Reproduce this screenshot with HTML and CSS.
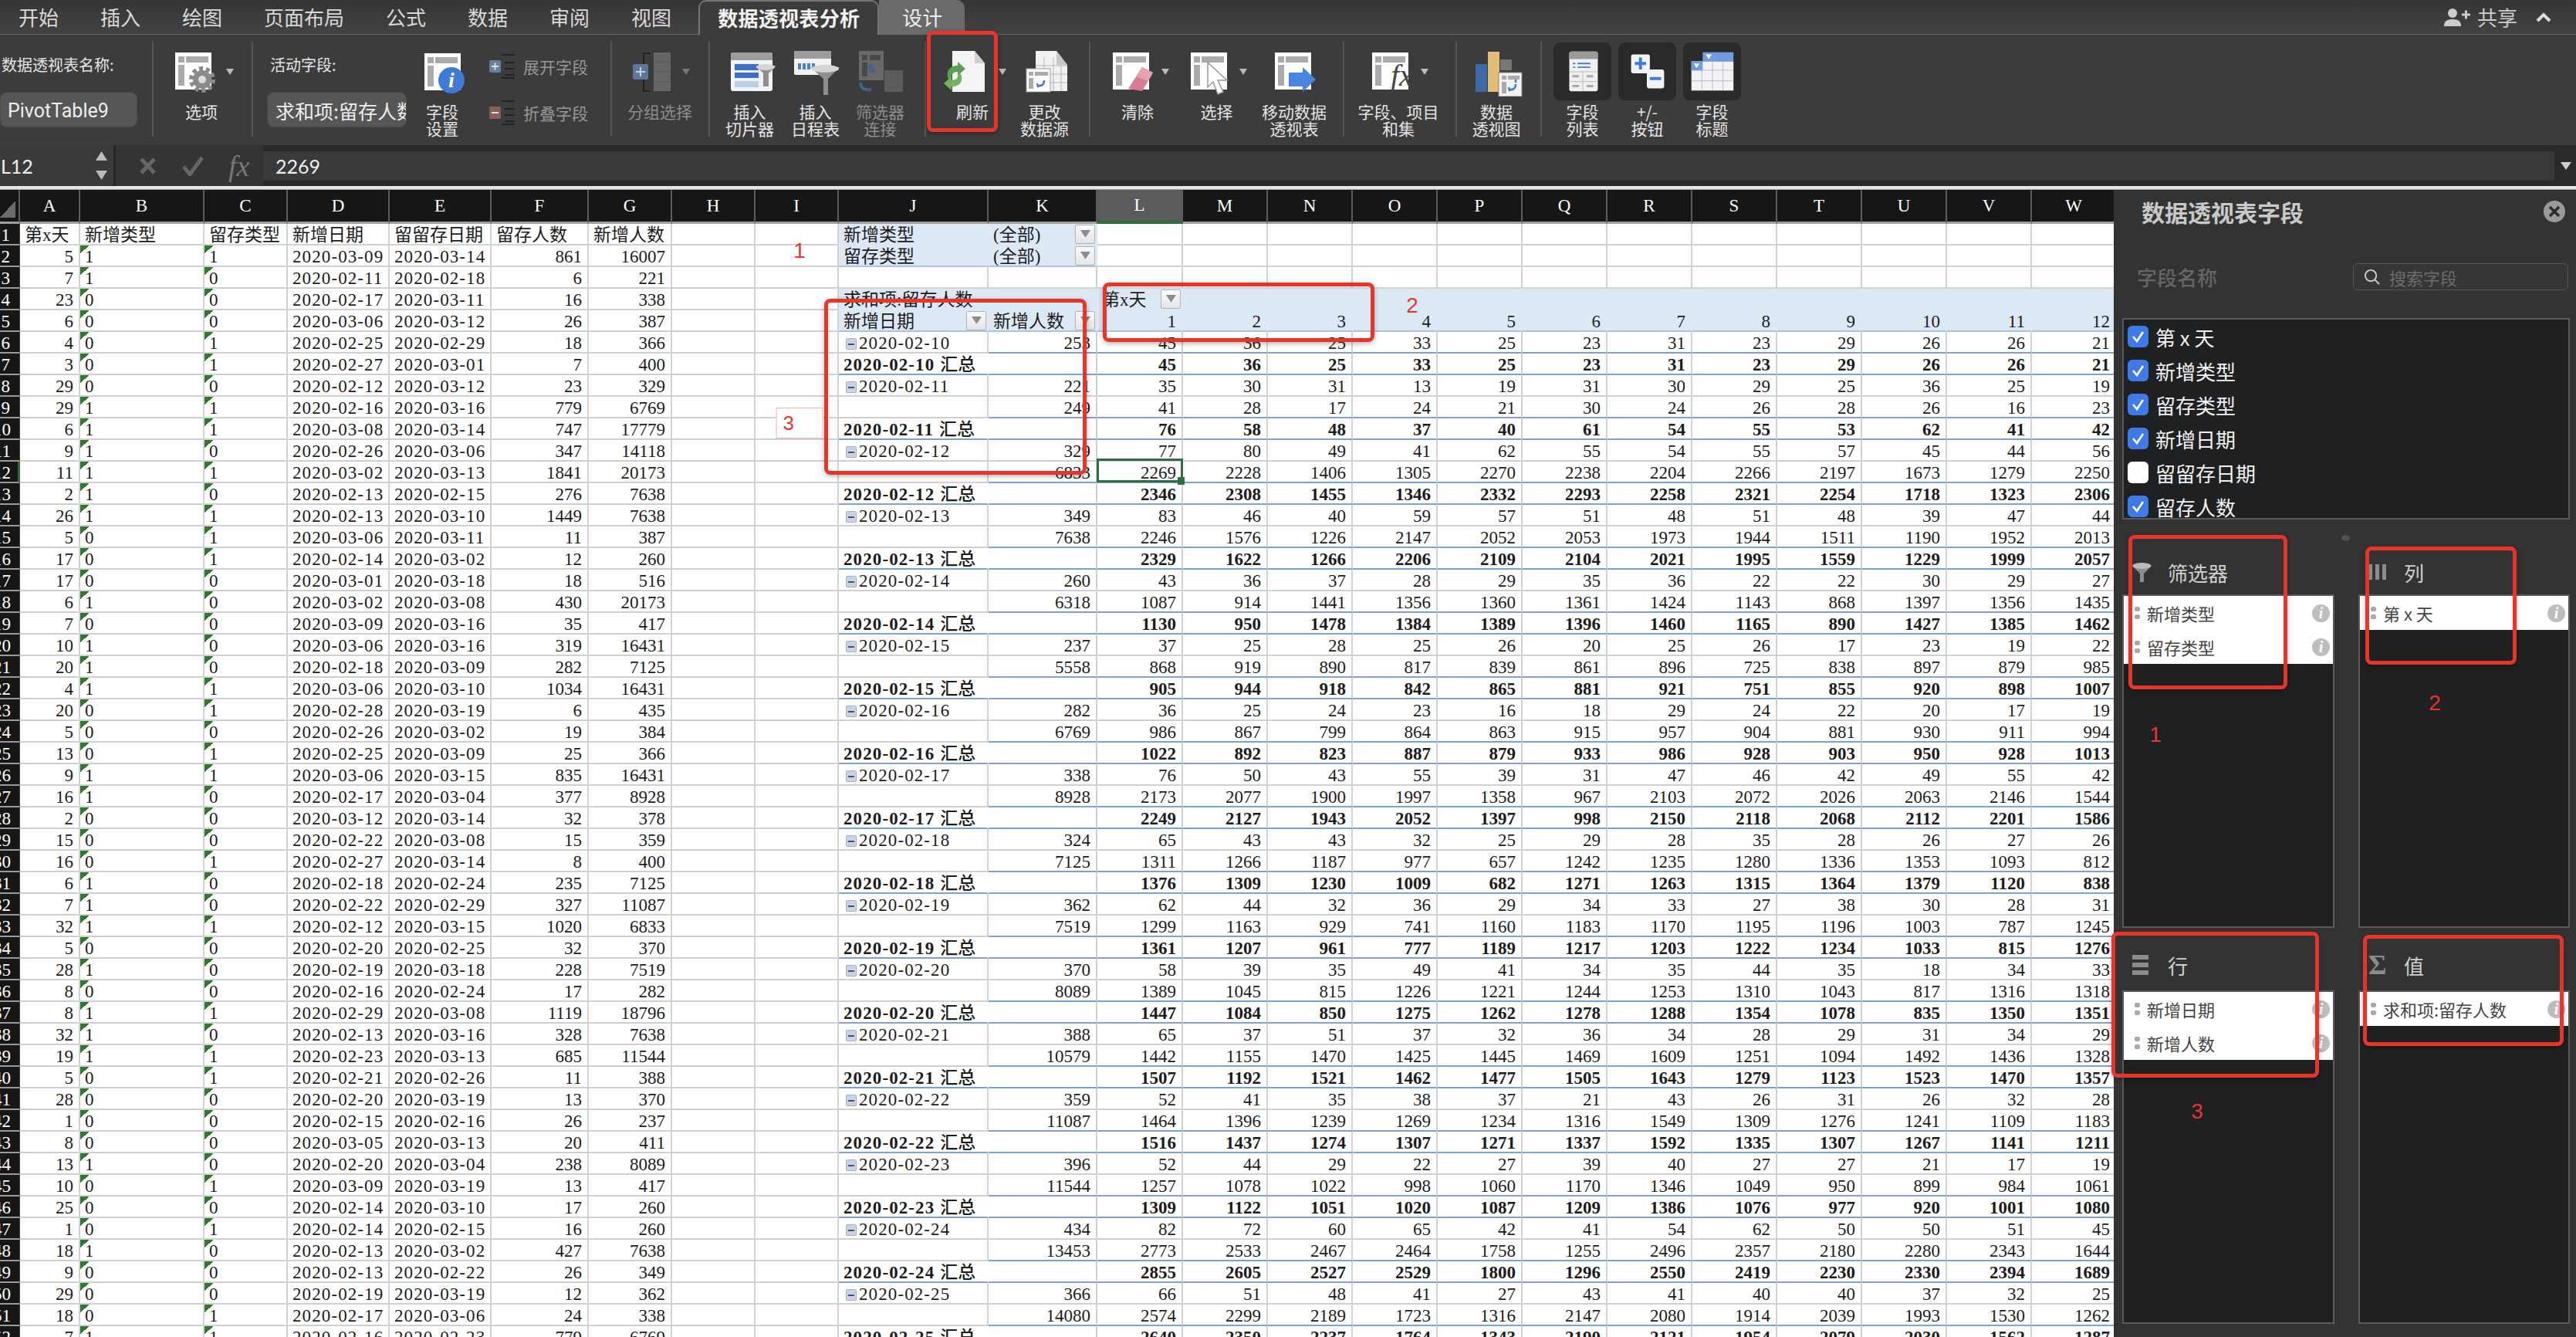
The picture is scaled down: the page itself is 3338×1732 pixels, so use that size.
FILE: index.html
```html
<!DOCTYPE html>
<html lang="zh">
<head>
<meta charset="utf-8">
<title>数据透视表</title>
<link rel="stylesheet" href="styles.css">
</head>
<body>
<svg class="defs" aria-hidden="true">
  <symbol id="pv" viewBox="0 0 47 48"><rect width="47" height="48" fill="#fff"/><path d="M4 5h8v8H4zM14 5h29v8H14zM4 16h8v27H4z" fill="#aaa"/></symbol>
  <symbol id="chk" viewBox="0 0 27 28"><path d="M7 14l5 6 8-12" fill="none" stroke="#fff" stroke-width="2.6"/></symbol>
  <symbol id="up" viewBox="0 0 12 10"><path d="M0 0h12L6 9z" fill="#8c8c8c"/></symbol>
</svg>

<nav class="tabs">
  <span class="tab first">开始</span><span class="tab">插入</span><span class="tab">绘图</span><span class="tab">页面布局</span><span class="tab">公式</span><span class="tab">数据</span><span class="tab">审阅</span><span class="tab">视图</span>
  <span class="tab active">数据透视表分析</span><span class="tab design">设计</span>
  <div class="share">
    <svg class="share-ic" viewBox="0 0 34 24"><circle cx="11" cy="7" r="6" fill="#ccc"/><path d="M0 24c0-7 4-9 11-9s11 2 11 9z" fill="#ccc"/><path d="M23 9h11M28.500 3.500v11" stroke="#ccc" stroke-width="3"/></svg>
    <span>共享</span>
    <svg class="chev" viewBox="0 0 20 13"><path d="M2 11l8-8 8 8" fill="none" stroke="#ddd" stroke-width="4"/></svg>
  </div>
</nav>

<section class="ribbon">
  <div class="namegrp">
    <div class="rlabel">数据透视表名称:</div>
    <div class="rinput name-input">PivotTable9</div>
  </div>
  <i class="sep"></i>
  <div class="rb b-options">
    <svg class="ic" viewBox="0 0 84 62"><use href="#pv" x="8" y="5" width="47" height="48"/><circle cx="43" cy="40" r="14" fill="none" stroke="#8a8a8a" stroke-width="6" stroke-dasharray="5 3.800"/><circle cx="43" cy="40" r="12" fill="#8a8a8a"/><circle cx="43" cy="40" r="5" fill="#ddd"/><path d="M74 26h10l-5 8z" fill="#bbb"/></svg>
    <span>选项</span>
  </div>
  <i class="sep s-a"></i>
  <div class="activegrp">
    <div class="rlabel pad">活动字段:</div>
    <div class="rinput field-input">求和项:留存人数</div>
  </div>
  <div class="rb b-setting">
    <svg class="ic" viewBox="0 0 60 62"><use href="#pv" x="7" y="6" width="47" height="48"/><circle cx="42" cy="41" r="17" fill="#3f7ad6"/><text x="42" y="50" class="ic-i">i</text></svg>
    <span>字段<br>设置</span>
  </div>
  <div class="expandcol">
    <div class="exrow"><svg viewBox="0 0 33 33"><path d="M16 2h17M20 12h13M20 20h13M20 28h13M16 32h17" stroke="#222" stroke-width="2"/><rect y="9" width="15" height="16" rx="2" fill="#64809f"/><path d="M3 17h9M7.500 12.500v9" stroke="#ddd" stroke-width="2"/></svg><span>展开字段</span></div>
    <div class="exrow"><svg viewBox="0 0 33 33"><path d="M16 2h17M20 12h13M20 20h13M20 28h13M16 32h17" stroke="#222" stroke-width="2"/><rect y="9" width="15" height="16" rx="2" fill="#8b5c5c"/><path d="M3 17h9" stroke="#ddd" stroke-width="2"/></svg><span>折叠字段</span></div>
  </div>
  <i class="sep s-b"></i>
  <div class="rb b-group dim">
    <svg class="ic" viewBox="0 0 92 62"><path d="M33 6h-8v49h8" fill="none" stroke="#222" stroke-width="2"/><path d="M38 5h22v50H38z" fill="#666"/><path d="M38 17h22M38 30h22M38 43h22" stroke="#555"/><rect x="11" y="20" width="20" height="20" rx="2" fill="#5c7898"/><path d="M15 30h12M21 24v12" stroke="#ccd" stroke-width="2"/><path d="M75 26h10l-5 8z" fill="#777"/></svg>
    <span>分组选择</span>
  </div>
  <i class="sep s-b"></i>
  <div class="rb b-slicer">
    <svg class="ic" viewBox="0 0 73 62"><rect x="12" y="5" width="54" height="50" rx="3" fill="#f1f3f6"/><path d="M12 15V8q0-3 3-3h48q3 0 3 3v7z" fill="#9d9d9d"/><path d="M17 20h31v8H17zM17 31h31v7H17z" fill="#3f6fc4"/><path d="M17 42h31v8H17z" fill="#b7cfe9"/><path d="M44 22h27l-10 10v17h-7V32z" fill="#8f8f8f"/><ellipse cx="57" cy="24" rx="12" ry="4" fill="#d5d5d5"/></svg>
    <span>插入<br>切片器</span>
  </div>
  <div class="rb b-timeline">
    <svg class="ic" viewBox="0 0 73 62"><rect x="9" y="3" width="48" height="31" rx="2" fill="#f1f3f6"/><path d="M9 13V5q0-2 2-2h44q2 0 2 2v8z" fill="#9d9d9d"/><path d="M14 19h4v8h-4zM20 19h4v8h-4zM26 19h4v8h-4zM32 19h4v8h-4z" fill="#4f7fcc"/><path d="M30 24h38L53 39v21h-6V39z" fill="#8f8f8f"/><ellipse cx="49" cy="26" rx="18" ry="5" fill="#d5d5d5"/></svg>
    <span>插入<br>日程表</span>
  </div>
  <div class="rb b-conn dim">
    <svg class="ic" viewBox="0 0 73 62"><g opacity=".55"><rect x="9" y="3" width="32" height="38" fill="#8f8f8f"/><path d="M13 8h7v7h-7zM23 8h14v7H23zM13 18h7v18h-7z" fill="#555"/><path d="M30 30c-6 0-8-4-7-9M26 20l-4 5 6 2" fill="none" stroke="#4a7ccc" stroke-width="3"/><rect x="42" y="28" width="24" height="28" fill="#777"/><path d="M11 44c0 8 6 10 14 9" fill="none" stroke="#4a7ccc" stroke-width="4"/></g></svg>
    <span>筛选器<br>连接</span>
  </div>
  <i class="sep s-c"></i>
  <div class="rb b-refresh">
    <svg class="ic" viewBox="0 0 90 62"><path d="M19 3h29l13 16v37H19z" fill="#f4f4f4"/><path d="M48 3l13 16H48z" fill="#cfcfcf"/><path d="M14 39c-4-10 2-17 12-17v-5l10 9-10 9v-5c-6 0-9 4-8 9z" fill="#5aa04e"/><path d="M30 33c4 10-2 16-12 16v5L8 45l10-9v5c6 0 9-3 8-8z" fill="#6fb35f"/><path d="M79 26h10l-5 8z" fill="#bbb"/></svg>
    <span>刷新</span>
  </div>
  <div class="rb b-source">
    <svg class="ic" viewBox="0 0 73 62"><path d="M25 3h27l14 18v34H25z" fill="#f1f1f1"/><path d="M52 3l14 18H52z" fill="#c6c6c6"/><path d="M36 12v43M48 12v43M58 22v33M25 22h41M25 33h41M25 44h41" stroke="#b5b5b5"/><rect x="13" y="26" width="31" height="30" fill="#fff" stroke="#999"/><path d="M16 30h6v5h-6zM24 30h17v5H24zM16 38h6v14h-6z" fill="#aaa"/><path d="M36 41c0 6-4 8-8 7M27 45l1 4 4-2" fill="none" stroke="#3f7ad6" stroke-width="2.500"/></svg>
    <span>更改<br>数据源</span>
  </div>
  <i class="sep s-c"></i>
  <div class="rb b-clear">
    <svg class="ic" viewBox="0 0 86 62"><use href="#pv" x="11" y="5" width="47" height="48"/><path d="M49 24l14 7-14 24-18-3z" fill="#d77c92"/><path d="M49 24l14 7-6 11-16-6z" fill="#e7a2b2"/><path d="M74 26h10l-5 8z" fill="#bbb"/></svg>
    <span>清除</span>
  </div>
  <div class="rb b-select">
    <svg class="ic" viewBox="0 0 81 62"><use href="#pv" x="7" y="5" width="47" height="48"/><path d="M29 18v32l7-7 6 16 7-3-7-15h12z" fill="#fff" stroke="#999" stroke-width="1.500"/><path d="M70 26h10l-5 8z" fill="#bbb"/></svg>
    <span>选择</span>
  </div>
  <div class="rb b-move">
    <svg class="ic" viewBox="0 0 92 62"><use href="#pv" x="21" y="5" width="47" height="48"/><path d="M39 31h18V24l17 16-17 16v-7H39z" fill="#4785e0"/></svg>
    <span>移动数据<br>透视表</span>
  </div>
  <i class="sep s-b"></i>
  <div class="rb b-calc">
    <svg class="ic" viewBox="0 0 108 62"><use href="#pv" x="20" y="5" width="47" height="48"/><text x="44" y="48" class="ic-fx">fx</text><path d="M83 26h10l-5 8z" fill="#bbb"/></svg>
    <span>字段、项目<br>和集</span>
  </div>
  <i class="sep s-d"></i>
  <div class="rb b-chart">
    <svg class="ic" viewBox="0 0 70 62"><path d="M8 20h15v36H8z" fill="#3e6ba8"/><path d="M24 4h15v52H24z" fill="#e2bd78"/><path d="M40 14h15v14H40z" fill="#777"/><rect x="38" y="31" width="30" height="31" fill="#f2f2f2" stroke="#888"/><path d="M42 35h6v5h-6zM50 35h15v5H50zM42 43h6v15h-6z" fill="#aaa"/><path d="M60 46c0 6-4 8-8 7M51 50l1 4 4-2M60 44v-4" fill="none" stroke="#3f7ad6" stroke-width="2.500"/></svg>
    <span>数据<br>透视图</span>
  </div>
  <i class="sep s-e"></i>
  <div class="rb boxed b-flist">
    <div class="box"><svg viewBox="0 0 75 75"><rect x="20" y="11" width="38" height="53" rx="3" fill="#eef0f2"/><path d="M20 21v-7q0-3 3-3h32q3 0 3 3v7z" fill="#9a9a9a"/><path d="M25 27h3M31 27h17M25 32h3M31 32h17" stroke="#4c7fd0" stroke-width="2"/><path d="M20 38h38M38 38v26M20 51h38" stroke="#bbb"/><path d="M24 44h9M43 44h9M24 57h9M43 57h9" stroke="#aaa" stroke-width="3"/></svg></div>
    <span>字段<br>列表</span>
  </div>
  <div class="rb boxed b-plus">
    <div class="box"><svg viewBox="0 0 75 75"><rect x="16" y="15" width="25" height="25" rx="3" fill="#f1f3f6"/><path d="M21 27h15M28.500 19v16" stroke="#3f7ad6" stroke-width="4"/><rect x="37" y="35" width="23" height="25" rx="3" fill="#f1f3f6"/><path d="M41 47h15" stroke="#3f7ad6" stroke-width="4"/></svg></div>
    <span>+/-<br>按钮</span>
  </div>
  <div class="rb boxed b-fhead">
    <div class="box"><svg viewBox="0 0 75 75"><rect x="10" y="24" width="56" height="39" fill="#f1f3f6"/><path d="M10 36h56M10 50h56M24 24v39M38 24v39M52 24v39" stroke="#bbb"/><rect x="25" y="12" width="41" height="12" fill="#6f9be0"/><rect x="10" y="24" width="15" height="12" fill="#6f9be0"/><path d="M29 15h8l-4 6zM13 27h8l-4 6z" fill="#fff"/></svg></div>
    <span>字段<br>标题</span>
  </div>
</section>

<section class="formula">
  <div class="namebox"><span>L12</span>
    <div class="spin"><svg viewBox="0 0 15 12"><path d="M7.500 0L15 12H0z" fill="#bbb"/></svg><svg viewBox="0 0 15 12"><path d="M0 0h15L7.500 12z" fill="#bbb"/></svg></div>
  </div>
  <div class="fx-tools">
    <svg class="fx-x" viewBox="0 0 21 22"><path d="M2 2l17 18M19 2L2 20" stroke="#666" stroke-width="5"/></svg>
    <svg class="fx-c" viewBox="0 0 28 26"><path d="M2 14l8 10L26 2" fill="none" stroke="#666" stroke-width="5"/></svg>
    <span class="fx-f">fx</span>
  </div>
  <div class="fx-input">2269</div>
  <svg class="fx-more" viewBox="0 0 14 10"><path d="M0 0h14L7 10z" fill="#ccc"/></svg>
</section>
<div class="divider"></div>

<main class="main">
  <div class="sheet"><table class="grid" id="grid"></table></div>
  <aside class="panel">
    <div class="p-title"><h2>数据透视表字段</h2>
      <svg class="p-close" viewBox="0 0 28 28"><circle cx="14" cy="14" r="14" fill="#9a9a9a"/><path d="M8 8l12 12M20 8L8 20" stroke="#2b2b2b" stroke-width="3.500"/></svg>
    </div>
    <div class="p-search"><span class="p-fname">字段名称</span>
      <div class="search"><svg viewBox="0 0 22 22"><circle cx="9.500" cy="9.500" r="7.500" fill="none" stroke="#ccc" stroke-width="2"/><path d="M15 15l6 6" stroke="#ccc" stroke-width="2"/></svg><span>搜索字段</span></div>
    </div>
    <div class="fields">
      <div class="fld"><span class="cb on"><svg><use href="#chk"/></svg></span>第 x 天</div>
      <div class="fld"><span class="cb on"><svg><use href="#chk"/></svg></span>新增类型</div>
      <div class="fld"><span class="cb on"><svg><use href="#chk"/></svg></span>留存类型</div>
      <div class="fld"><span class="cb on"><svg><use href="#chk"/></svg></span>新增日期</div>
      <div class="fld"><span class="cb"></span>留留存日期</div>
      <div class="fld"><span class="cb on"><svg><use href="#chk"/></svg></span>留存人数</div>
    </div>
    <i class="handle"></i>
    <div class="areas">
      <div class="area">
        <div class="a-head"><span class="a-ic"><svg class="ic-fun" viewBox="0 0 25 27"><path d="M0 5h25L15 15v11H10V15z" fill="#8c8c8c"/><ellipse cx="12.500" cy="5" rx="12" ry="4" fill="#bbb"/></svg></span>筛选器</div>
        <div class="a-list">
          <div class="a-row"><i class="grip"></i><span>新增类型</span><b class="inf">i</b></div>
          <div class="a-row"><i class="grip"></i><span>留存类型</span><b class="inf">i</b></div>
        </div>
      </div>
      <div class="area">
        <div class="a-head"><span class="a-ic"><svg class="ic-col" viewBox="0 0 23 20"><path d="M0 0h5v20H0zM9 0h5v20H9zM18 0h5v20h-5z" fill="#8c8c8c"/></svg></span>列</div>
        <div class="a-list">
          <div class="a-row"><i class="grip"></i><span>第 x 天</span><b class="inf">i</b></div>
        </div>
      </div>
      <div class="area">
        <div class="a-head low"><span class="a-ic"><svg class="ic-row" viewBox="0 0 21 26"><path d="M0 0h21v6H0zM0 10h21v6H0zM0 20h21v6H0z" fill="#8c8c8c"/></svg></span>行</div>
        <div class="a-list">
          <div class="a-row"><i class="grip"></i><span>新增日期</span><b class="inf">i</b></div>
          <div class="a-row"><i class="grip"></i><span>新增人数</span><b class="inf">i</b></div>
        </div>
      </div>
      <div class="area">
        <div class="a-head low"><span class="a-ic sigma">Σ</span>值</div>
        <div class="a-list">
          <div class="a-row"><i class="grip"></i><span>求和项:留存人数</span><b class="inf">i</b></div>
        </div>
      </div>
    </div>
  </aside>
</main>

<div class="mark m-refresh"></div>
<div class="mark m-col"></div>
<div class="mark m-row"></div>
<div class="mark m-fil"></div>
<div class="mark m-pcol"></div>
<div class="mark m-prow"></div>
<div class="mark m-pval"></div>
<span class="num n1">1</span>
<span class="num n2">2</span>
<span class="num n3">3</span>
<span class="num n4">1</span>
<span class="num n5">2</span>
<span class="num n6">3</span>
<script src="script.js"></script>
</body>
</html>
```
FILE: styles.css
```css
* { box-sizing: border-box; }
html, body { margin: 0; padding: 0; }
body {
  width: 3338px; height: 1732px; overflow: hidden; position: relative;
  background: #333; color: #e0e0e0;
  font-family: "Noto Sans CJK SC", "Noto Sans", sans-serif;
  display: flex; flex-direction: column;
}
.defs { position: absolute; width: 0; height: 0; }

/* tabs */
.tabs {
  height: 45px; flex: none; display: flex; align-items: stretch;
  background: linear-gradient(#353535, #434343);
  border-bottom: 1px solid #6a6a6a;
  font-size: 26px; line-height: 44px; color: #d9d9d9;
}
.tab { padding: 0 27px; }
.tab.first { margin-left: -3px; }
.tab.active {
  margin-left: 8px; padding: 0 23px; color: #f2f2f2; font-weight: 700; letter-spacing: .3px;
  background: #3c3c3c; border: 2px solid #757575; border-bottom: 0;
  border-radius: 10px 10px 0 0; height: 45px; line-height: 42px;
}
.tab.design { padding: 0 29px 0 30px; background: #6a6a6a; color: #eee; border-radius: 0 10px 0 0; }
.share { margin-left: auto; display: flex; align-items: center; color: #ccc; font-size: 26px; padding-right: 32px; }
.share-ic { width: 34px; height: 24px; margin-right: 9px; }
.chev { width: 20px; height: 13px; margin-left: 24px; flex: none; }

/* ribbon */
.ribbon { height: 143px; flex: none; background: #3c3c3c; display: flex; align-items: flex-start; font-size: 21px; line-height: 22px; color: #e4e4e4; }
.sep { flex: none; width: 2px; height: 123px; margin-top: 9px; background: #565656; }
.s-a { margin-left: 23px; }
.s-b { margin-left: 17px; }
.s-c { margin-left: 21px; }
.s-d { margin-left: 20px; }
.s-e { margin-left: 22px; }
.namegrp { width: 197px; flex: none; padding-top: 28px; }
.activegrp { width: 181px; flex: none; margin-left: 18px; padding-top: 28px; }
.rlabel { font-size: 20px; line-height: 22px; padding-left: 2px; white-space: nowrap; }
.rlabel.pad { padding-left: 4px; }
.rinput {
  margin-top: 24px; height: 46px; background: #565656; border-radius: 9px;
  border: 1px solid #4a4a4a; color: #eee; line-height: 47px; overflow: hidden; white-space: nowrap;
}
.name-input { width: 178px; padding-left: 9px; font-family: Roboto, sans-serif; font-size: 25px; }
.field-input { padding-left: 10px; font-size: 25px; }
.rb { flex: none; display: flex; flex-direction: column; align-items: center; text-align: center; padding-top: 18px; white-space: nowrap; }
.ic { width: 100%; height: 62px; display: block; margin-bottom: 8px; flex: none; }
.ic-i { font: italic 700 28px "Liberation Serif", serif; fill: #fff; text-anchor: middle; }
.ic-fx { font: italic 40px "Liberation Serif", serif; fill: #444; }
.dim { color: #8d8d8d; }
.b-options { width: 84px; margin-left: 20px; }
.b-setting { width: 60px; margin-left: 16px; }
.b-group { width: 92px; margin-left: 16px; }
.b-slicer { width: 73px; margin-left: 15px; }
.b-timeline { width: 73px; margin-left: 12px; }
.b-conn { width: 73px; margin-left: 11px; }
.b-refresh { width: 90px; margin-left: 15px; }
.b-source { width: 73px; margin-left: 12px; }
.b-clear { width: 86px; margin-left: 18px; }
.b-select { width: 81px; margin-left: 19px; }
.b-move { width: 92px; margin-left: 14px; }
.b-calc { width: 108px; margin-left: 16px; }
.b-chart { width: 70px; margin-left: 16px; }
.expandcol { width: 140px; margin-left: 31px; flex: none; padding-top: 24px; display: flex; flex-direction: column; gap: 27px; }
.exrow { display: flex; align-items: center; height: 33px; gap: 11px; color: #979797; font-size: 21px; }
.exrow svg { width: 33px; height: 33px; flex: none; }
.boxed { width: 75px; padding-top: 10px; }
.box { width: 75px; height: 75px; background: #2a2a2a; border-radius: 9px; margin-bottom: 3px; border: 1px solid #262626; }
.box svg { display: block; width: 73px; height: 73px; }
.b-flist { margin-left: 15px; }
.b-plus, .b-fhead { margin-left: 9px; }

/* formula bar */
.formula { height: 53px; flex: none; display: flex; align-items: center; background: #2a2a2a; }
.namebox { width: 150px; height: 53px; flex: none; background: #3a3a3a; border-right: 3px solid #262626; display: flex; align-items: center; justify-content: space-between; padding: 0 8px 0 1px; font: 25px Lato, sans-serif; color: #eee; }
.spin { display: flex; flex-direction: column; gap: 13px; }
.spin svg { display: block; width: 15px; height: 12px; }
.fx-tools { width: 191px; height: 53px; flex: none; display: flex; align-items: center; background: #343434; padding-left: 31px; }
.fx-x { width: 21px; height: 22px; }
.fx-c { width: 28px; height: 26px; margin-left: 34px; }
.fx-f { margin-left: 32px; font: italic 38px "Liberation Serif", serif; color: #777; }
.fx-input { width: 2969px; height: 38px; flex: none; background: #3a3a3a; color: #eee; padding-left: 16px; font: 25px/38px Lato, sans-serif; }
.fx-more { width: 14px; height: 10px; margin-left: 8px; }
.divider { height: 5px; flex: none; background: #e6e6e6; border-bottom: 1px solid #999; }

/* layout */
.main { flex: 1; display: flex; min-height: 0; }
.sheet { width: 2739px; flex: none; overflow: hidden; background: #fff; }
.panel { width: 599px; flex: none; background: #333; position: relative; }

/* sheet */
.grid { table-layout: fixed; width: 2743px; border-collapse: separate; border-spacing: 0; font: 23px/22px "Liberation Serif", "Noto Sans CJK SC", serif; color: #1c1c1c; }
.cr { width: 26px; } .w78 { width: 78px; } .w161 { width: 161px; } .w108 { width: 108px; } .w132 { width: 132px; }
.w126 { width: 126px; } .w194 { width: 194px; } .w141 { width: 141px; } .w111 { width: 111px; } .w110 { width: 110px; }
.grid th { background: #161616; color: #fff; font-weight: 400; padding: 0; }
.ch { height: 44px; border-right: 2px solid #5c5c5c; border-bottom: 3px solid #a0a0a0; }
.ch.sel { background: #5b5b5b; border-bottom: 4px solid #2c6b3f; }
.corner { position: relative; }
.corner::after { content: ""; position: absolute; left: 0; bottom: 5px; width: 20px; height: 22px; background: linear-gradient(to bottom right, transparent 50%, #6c6c6c 50%); }
.grid th.rh { height: 28px; direction: rtl; text-align: right; padding: 4px 12px 0 0; overflow: hidden; border-bottom: 2px solid #9a9a9a; border-right: 1px solid #444; }
.grid th.rh.sel { border-right: 3px solid #2c6b3f; }
.grid td { height: 28px; padding: 4px 7px 0 6px; border-right: 2px solid #d2d2d2; border-bottom: 2px solid #d2d2d2; white-space: nowrap; overflow: hidden; position: relative; }
.r { text-align: right; }
.date { letter-spacing: 1.1px; }
.hz { font-weight: 500; letter-spacing: 0; }
.tri { background: linear-gradient(to bottom right, #2f7a2c 50%, transparent 50%) no-repeat left top / 12px 10px; }
.grid td.blue { background: #dde8f5; border-color: #dde8f5; }
.grid td.blue.line { border-bottom-color: #a9c4e4; }
.grid td.pb { border-bottom-color: #7ba3cf; }
.grid td.nr { border-right-color: transparent; }
.bold { font-weight: 700; }
.minus { display: inline-block; width: 14px; height: 15px; margin: 0 3px 0 3px; vertical-align: -1px; background: #c9d3e4; border: 1px solid #9fb0c8; border-radius: 2px; position: relative; }
.minus::after { content: ""; position: absolute; left: 2px; right: 2px; top: 6px; height: 2px; background: #44506a; }
.dd { position: absolute; right: 1px; top: 1px; width: 26px; height: 25px; background: linear-gradient(#fafafa, #e4e4e4); border: 1px solid #b0b4ba; border-radius: 2px; display: flex; align-items: center; justify-content: center; }
.dd svg { width: 13px; height: 11px; }
.grid td.act { overflow: visible; z-index: 2; }
.act::before { content: ""; position: absolute; left: -1px; right: -2px; top: -4px; bottom: -1px; border: 3px solid #2f6d43; }
.act::after { content: ""; position: absolute; right: -4px; bottom: -4px; width: 9px; height: 10px; background: #2f6d43; }

/* panel */
.p-title { height: 55px; display: flex; align-items: center; justify-content: space-between; padding: 0 14px 0 36px; }
.p-title h2 { margin: 0; font-size: 30px; font-weight: 700; color: #c8c8c8; }
.p-close { width: 28px; height: 28px; }
.p-search { margin-top: 40px; height: 35px; display: flex; align-items: center; justify-content: space-between; padding: 0 10px 0 30px; }
.p-fname { font-size: 26px; font-weight: 500; color: #666; }
.search { width: 279px; height: 35px; border: 1px solid #555; border-radius: 6px; background: #363636; display: flex; align-items: center; padding-left: 13px; color: #6c6c6c; font-size: 22px; }
.search svg { width: 21px; height: 21px; margin-right: 12px; }
.fields { margin: 36px 0 0 11px; width: 580px; height: 261px; background: #1f2022; border: 2px solid #5a5a5a; padding-left: 5px; overflow: hidden; }
.fld { height: 44px; display: flex; align-items: center; gap: 9px; font-size: 26px; color: #f2f2f2; }
.cb { width: 27px; height: 28px; flex: none; background: #fff; border-radius: 6px; }
.cb.on { background: #3f7be8; }
.cb svg { display: block; width: 27px; height: 28px; }
.handle { position: absolute; left: 295px; top: 447px; width: 11px; height: 8px; border-radius: 50%; background: #505050; }
.areas { margin: 39px 0 0 11px; width: 580px; display: grid; grid-template-columns: 275px 274px; column-gap: 31px; row-gap: 15px; }
.a-head { height: 58px; display: flex; align-items: center; padding-left: 13px; font-size: 26px; color: #d0d0d0; }
.a-head.low { height: 66px; }
.a-ic { width: 46px; flex: none; display: flex; align-items: center; }
.ic-fun { width: 25px; height: 27px; }
.ic-col { width: 23px; height: 20px; }
.ic-row { width: 21px; height: 26px; }
.sigma { font: 700 36px "Liberation Serif", serif; color: #8c8c8c; }
.a-list { height: 432px; background: #1f2022; border: 2px solid #5a5a5a; }
.a-row { height: 44px; background: #fff; display: flex; align-items: center; color: #444; font-size: 22px; padding: 0 4px 0 14px; }
.a-row span { flex: 1; padding-left: 9px; }
.grip { width: 7px; height: 18px; flex: none; background: radial-gradient(circle 3.500px at 3.500px 4px, #aaa 98%, transparent), radial-gradient(circle 3.500px at 3.500px 14px, #aaa 98%, transparent); }
.inf { width: 23px; height: 23px; border-radius: 50%; background: #bdbdbd; color: #fff; font: italic 700 20px/23px "Liberation Serif", serif; text-align: center; }

/* annotations */
.mark { position: absolute; border: 5px solid #e8352a; border-radius: 8px; box-shadow: 0 2px 6px rgba(0,0,0,.3); }
.m-refresh { left: 1201px; top: 40px; width: 92px; height: 131px; }
.m-col { left: 1429px; top: 366px; width: 352px; height: 77px; }
.m-row { left: 1068px; top: 387px; width: 340px; height: 228px; }
.m-fil { left: 2758px; top: 693px; width: 206px; height: 200px; }
.m-pcol { left: 3065px; top: 708px; width: 196px; height: 153px; }
.m-prow { left: 2736px; top: 1207px; width: 269px; height: 189px; }
.m-pval { left: 3062px; top: 1211px; width: 260px; height: 144px; }
.num { position: absolute; color: #e8352a; font: 28px/32px "Liberation Sans", sans-serif; transform: translate(-50%, -50%); }
.n1 { left: 1036px; top: 325px; }
.n2 { left: 1830px; top: 396px; }
.n3 { left: 1036px; top: 548px; width: 61px; height: 40px; background: #fff; border: 1px solid #f2b5b0; font-size: 26px; line-height: 38px; padding-left: 8px; }
.n4 { left: 2793px; top: 952px; }
.n5 { left: 3155px; top: 911px; }
.n6 { left: 2847px; top: 1440px; }
```
FILE: script.js
```js
var left = `5 1 1 03-09 03-14 861 16007
7 1 0 02-11 02-18 6 221
23 0 0 02-17 03-11 16 338
6 0 0 03-06 03-12 26 387
4 0 1 02-25 02-29 18 366
3 0 1 02-27 03-01 7 400
29 0 0 02-12 03-12 23 329
29 1 1 02-16 03-16 779 6769
6 1 1 03-08 03-14 747 17779
9 1 0 02-26 03-06 347 14118
11 1 1 03-02 03-13 1841 20173
2 1 0 02-13 02-15 276 7638
26 1 1 02-13 03-10 1449 7638
5 0 1 03-06 03-11 11 387
17 0 1 02-14 03-02 12 260
17 0 0 03-01 03-18 18 516
6 1 0 03-02 03-08 430 20173
7 0 0 03-09 03-16 35 417
10 1 0 03-06 03-16 319 16431
20 1 0 02-18 03-09 282 7125
4 1 1 03-06 03-10 1034 16431
20 0 1 02-28 03-19 6 435
5 0 0 02-26 03-02 19 384
13 0 1 02-25 03-09 25 366
9 1 1 03-06 03-15 835 16431
16 1 0 02-17 03-04 377 8928
2 0 0 03-12 03-14 32 378
15 0 0 02-22 03-08 15 359
16 0 1 02-27 03-14 8 400
6 1 0 02-18 02-24 235 7125
7 1 0 02-22 02-29 327 11087
32 1 1 02-12 03-15 1020 6833
5 0 0 02-20 02-25 32 370
28 1 0 02-19 03-18 228 7519
8 0 0 02-16 02-24 17 282
8 1 1 02-29 03-08 1119 18796
32 1 0 02-13 03-16 328 7638
19 1 1 02-23 03-13 685 11544
5 0 1 02-21 02-26 11 388
28 0 0 02-20 03-19 13 370
1 0 0 02-15 02-16 26 237
8 0 0 03-05 03-13 20 411
13 1 0 02-20 03-04 238 8089
10 0 1 03-09 03-19 13 417
25 0 0 02-14 03-10 17 260
1 0 1 02-14 02-15 16 260
18 1 0 02-13 03-02 427 7638
9 0 0 02-13 02-22 26 349
29 0 0 02-19 03-19 12 362
18 0 1 02-17 03-06 24 338
7 1 1 02-16 02-23 779 6769`.split("\n");

var piv = `d 02-10 253 45 36 25 33 25 23 31 23 29 26 26 21
t 02-10 45 36 25 33 25 23 31 23 29 26 26 21
d 02-11 221 35 30 31 13 19 31 30 29 25 36 25 19
n 249 41 28 17 24 21 30 24 26 28 26 16 23
t 02-11 76 58 48 37 40 61 54 55 53 62 41 42
d 02-12 329 77 80 49 41 62 55 54 55 57 45 44 56
n 6833 2269 2228 1406 1305 2270 2238 2204 2266 2197 1673 1279 2250
t 02-12 2346 2308 1455 1346 2332 2293 2258 2321 2254 1718 1323 2306
d 02-13 349 83 46 40 59 57 51 48 51 48 39 47 44
n 7638 2246 1576 1226 2147 2052 2053 1973 1944 1511 1190 1952 2013
t 02-13 2329 1622 1266 2206 2109 2104 2021 1995 1559 1229 1999 2057
d 02-14 260 43 36 37 28 29 35 36 22 22 30 29 27
n 6318 1087 914 1441 1356 1360 1361 1424 1143 868 1397 1356 1435
t 02-14 1130 950 1478 1384 1389 1396 1460 1165 890 1427 1385 1462
d 02-15 237 37 25 28 25 26 20 25 26 17 23 19 22
n 5558 868 919 890 817 839 861 896 725 838 897 879 985
t 02-15 905 944 918 842 865 881 921 751 855 920 898 1007
d 02-16 282 36 25 24 23 16 18 29 24 22 20 17 19
n 6769 986 867 799 864 863 915 957 904 881 930 911 994
t 02-16 1022 892 823 887 879 933 986 928 903 950 928 1013
d 02-17 338 76 50 43 55 39 31 47 46 42 49 55 42
n 8928 2173 2077 1900 1997 1358 967 2103 2072 2026 2063 2146 1544
t 02-17 2249 2127 1943 2052 1397 998 2150 2118 2068 2112 2201 1586
d 02-18 324 65 43 43 32 25 29 28 35 28 26 27 26
n 7125 1311 1266 1187 977 657 1242 1235 1280 1336 1353 1093 812
t 02-18 1376 1309 1230 1009 682 1271 1263 1315 1364 1379 1120 838
d 02-19 362 62 44 32 36 29 34 33 27 38 30 28 31
n 7519 1299 1163 929 741 1160 1183 1170 1195 1196 1003 787 1245
t 02-19 1361 1207 961 777 1189 1217 1203 1222 1234 1033 815 1276
d 02-20 370 58 39 35 49 41 34 35 44 35 18 34 33
n 8089 1389 1045 815 1226 1221 1244 1253 1310 1043 817 1316 1318
t 02-20 1447 1084 850 1275 1262 1278 1288 1354 1078 835 1350 1351
d 02-21 388 65 37 51 37 32 36 34 28 29 31 34 29
n 10579 1442 1155 1470 1425 1445 1469 1609 1251 1094 1492 1436 1328
t 02-21 1507 1192 1521 1462 1477 1505 1643 1279 1123 1523 1470 1357
d 02-22 359 52 41 35 38 37 21 43 26 31 26 32 28
n 11087 1464 1396 1239 1269 1234 1316 1549 1309 1276 1241 1109 1183
t 02-22 1516 1437 1274 1307 1271 1337 1592 1335 1307 1267 1141 1211
d 02-23 396 52 44 29 22 27 39 40 27 27 21 17 19
n 11544 1257 1078 1022 998 1060 1170 1346 1049 950 899 984 1061
t 02-23 1309 1122 1051 1020 1087 1209 1386 1076 977 920 1001 1080
d 02-24 434 82 72 60 65 42 41 54 62 50 50 51 45
n 13453 2773 2533 2467 2464 1758 1255 2496 2357 2180 2280 2343 1644
t 02-24 2855 2605 2527 2529 1800 1296 2550 2419 2230 2330 2394 1689
d 02-25 366 66 51 48 41 27 43 41 40 40 37 32 25
n 14080 2574 2299 2189 1723 1316 2147 2080 1914 2039 1993 1530 1262
t 02-25 2640 2350 2237 1764 1343 2190 2121 1954 2079 2030 1562 1287`.split("\n");

var widths = ["cr","w78","w161","w108","w132","w132","w126","w108","w108","w108","w194","w141","w111"];
for (var i = 0; i < 11; i++) widths.push("w110");
var letters = "ABCDEFGHIJKLMNOPQRSTUVW".split("");
var dd = '<span class="dd"><svg><use href="#up"/></svg></span>';

function td(cls, txt) { return '<td class="' + cls + '">' + (txt === undefined ? "" : txt) + "</td>"; }
function rep(cls, n) { var s = ""; for (var k = 0; k < n; k++) s += td(cls); return s; }

var html = "<colgroup>" + widths.map(function (w) { return '<col class="' + w + '">'; }).join("") + "</colgroup>";
html += '<tr><th class="ch corner"></th>' + letters.map(function (c) {
  return '<th class="ch' + (c === "L" ? " sel" : "") + '">' + c + "</th>";
}).join("") + "</tr>";

function pivotCells(r) {
  if (r === 1 || r === 2) {
    return td("blue nr" + (r === 2 ? " line" : ""), r === 1 ? "新增类型" : "留存类型") +
      td("blue nr" + (r === 2 ? " line" : ""), "(全部)" + dd) + rep("", 12);
  }
  if (r === 3) return rep("", 14);
  if (r === 4) return td("blue", "求和项:留存人数") + td("blue") + td("blue", "第x天" + dd) + rep("blue", 11);
  if (r === 5) {
    var s = td("blue line", "新增日期" + dd) + td("blue line", "新增人数" + dd);
    for (var n = 1; n <= 12; n++) s += td("blue line r", n);
    return s;
  }
  var p = piv[r - 6].split(" ");
  var type = p[0];
  var nextTotal = type !== "t" && piv[r - 5] && piv[r - 5].charAt(0) === "t";
  var blue = (type === "t" || nextTotal) ? " pb" : "";
  var out = "";
  var rest;
  if (type === "d") {
    out += td("date", '<i class="minus"></i>2020-' + p[1]);
    out += td("r" + blue, p[2]);
    rest = p.slice(3);
  } else if (type === "n") {
    out += td("");
    out += td("r" + blue, p[1]);
    rest = p.slice(2);
  } else {
    out += td("date bold nr pb", "2020-" + p[1] + ' <span class="hz">汇总</span>');
    out += td("pb");
    rest = p.slice(2);
  }
  rest.forEach(function (v, i) {
    var cls = "r" + blue + (type === "t" ? " bold" : "") + (r === 12 && i === 0 ? " act" : "");
    out += td(cls, v);
  });
  return out;
}

for (var r = 1; r <= 52; r++) {
  var row = '<tr><th class="rh' + (r === 12 ? " sel" : "") + '">' + r + "</th>";
  if (r === 1) {
    row += ["第x天","新增类型","留存类型","新增日期","留留存日期","留存人数","新增人数"].map(function (t) { return td("", t); }).join("");
  } else {
    var c = left[r - 2].split(" ");
    row += td("r", c[0]) + td("tri", c[1]) + td("tri", c[2]) + td("date", "2020-" + c[3]) + td("date", "2020-" + c[4]) + td("r", c[5]) + td("r", c[6]);
  }
  row += rep("", 2) + pivotCells(r) + "</tr>";
  html += row;
}
document.getElementById("grid").innerHTML = html;
```
